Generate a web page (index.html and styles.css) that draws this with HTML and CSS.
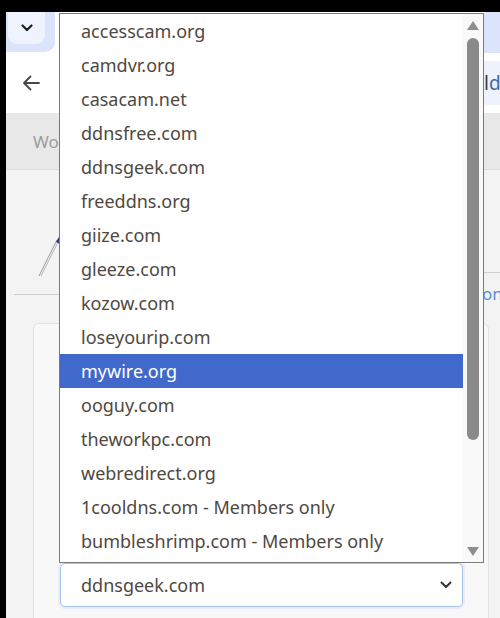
FILE: index.html
```html
<!DOCTYPE html>
<html lang="en">
<head>
<meta charset="utf-8">
<title>Dynamic DNS</title>
<link rel="stylesheet" href="styles.css">
</head>
<body>
<div class="screen">
  <div class="tabstrip">
    <div class="tabstrip-left">
      <div class="tabsearch">
        <svg width="12" height="8" viewBox="0 0 12 8"><path d="M1.5 1.5 L6 6 L10.5 1.5" fill="none" stroke="#1f1f1f" stroke-width="2.2" stroke-linecap="round" stroke-linejoin="round"/></svg>
      </div>
    </div>
    <div class="active-tab"></div>
    <div class="tabstrip-right"></div>
  </div>

  <div class="toolbar">
    <svg class="back" width="18" height="16" viewBox="0 0 18 16"><path d="M17 8 H2 M8.5 1.5 L2 8 L8.5 14.5" fill="none" stroke="#474747" stroke-width="1.8" stroke-linecap="round" stroke-linejoin="round"/></svg>
    <div class="omnibox"><span class="dark">l</span><span class="blue">dl</span></div>
  </div>

  <div class="banner">Wo</div>

  <div class="content">
    <div class="tools">
      <div class="tools-left">
        <svg class="pen" width="24" height="46" viewBox="0 0 24 46"><path d="M2 44 L20 8" stroke="#9a9a9a" stroke-width="1"/><path d="M4 44 L22 8" stroke="#b5b5b5" stroke-width="1"/><path d="M19 10 L23 3 L23 12 Z" fill="#2a3a9a"/></svg>
      </div>
      <div class="tools-right">
        <div class="tools-right-bar"></div>
        <span class="link">on</span>
      </div>
    </div>

    <div class="card">
      <div class="select">
        <span>ddnsgeek.com</span>
        <svg width="12" height="8" viewBox="0 0 12 8"><path d="M1.5 1.5 L6 6 L10.5 1.5" fill="none" stroke="#333" stroke-width="2" stroke-linecap="round" stroke-linejoin="round"/></svg>
      </div>
    </div>
  </div>

  <div class="dropdown">
    <div class="options">
      <div class="opt">accesscam.org</div>
      <div class="opt">camdvr.org</div>
      <div class="opt">casacam.net</div>
      <div class="opt">ddnsfree.com</div>
      <div class="opt">ddnsgeek.com</div>
      <div class="opt">freeddns.org</div>
      <div class="opt">giize.com</div>
      <div class="opt">gleeze.com</div>
      <div class="opt">kozow.com</div>
      <div class="opt">loseyourip.com</div>
      <div class="opt selected">mywire.org</div>
      <div class="opt">ooguy.com</div>
      <div class="opt">theworkpc.com</div>
      <div class="opt">webredirect.org</div>
      <div class="opt">1cooldns.com - Members only</div>
      <div class="opt">bumbleshrimp.com - Members only</div>
    </div>
    <div class="scrollbar">
      <svg class="arrow" width="12" height="9" viewBox="0 0 12 9"><path d="M6 0 L12 9 L0 9 Z" fill="#8e8e8e"/></svg>
      <div class="thumb"></div>
      <div class="spacer"></div>
      <svg class="arrow" width="12" height="9" viewBox="0 0 12 9"><path d="M0 0 L12 0 L6 9 Z" fill="#8e8e8e"/></svg>
    </div>
  </div>
</div>
</body>
</html>
```

FILE: styles.css
```css
* { box-sizing: border-box; }

html, body {
  margin: 0;
  padding: 0;
  background: #000;
  width: 500px;
  height: 618px;
  overflow: hidden;
}

body {
  padding: 12px 0 0 6px;
  font-family: "Noto Sans", "Open Sans", sans-serif;
}

.screen {
  position: relative;
  width: 494px;
  height: 606px;
  background: #f3f3f3;
  overflow: hidden;
}

/* tab strip */
.tabstrip {
  display: flex;
  height: 40px;
  background: #ffffff;
}
.tabstrip-left {
  width: 49px;
  height: 40px;
  background: #dbe4fb;
  border-bottom-right-radius: 10px;
  padding-left: 2px;
}
.tabsearch {
  width: 37px;
  height: 32px;
  background: #eef3fe;
  border-radius: 0 0 9px 9px;
  display: flex;
  align-items: center;
  justify-content: center;
}
.active-tab {
  flex: 1;
  background: #ffffff;
}
.tabstrip-right {
  width: 16px;
  background: #dbe4fb;
  height: 41px;
}

/* toolbar */
.toolbar {
  height: 61px;
  background: #ffffff;
  display: flex;
  align-items: center;
  padding-left: 16px;
}
.back { flex: 0 0 auto; }
.omnibox {
  margin-left: auto;
  flex: 0 0 40px;
  margin-right: -24px;
  height: 44px;
  background: #edf2fb;
  border-radius: 0 22px 22px 0;
  display: flex;
  align-items: center;
  font-size: 19px;
  padding-left: 0;
}
.omnibox .dark { color: #3a3a3a; }
.omnibox .blue { color: #3f66b8; }

/* banner */
.banner {
  height: 57px;
  background: #e8e8e8;
  border-bottom: 1px solid #dcdcdc;
  color: #9c9c9c;
  font-size: 17px;
  padding-left: 27px;
  display: flex;
  align-items: center;
}

/* content */
.content {
  background: #f3f3f3;
}
.tools {
  display: flex;
  align-items: flex-start;
  height: 153px;
}
.tools-left {
  margin-left: 8px;
  width: 60px;
  height: 125px;
  border-bottom: 1px solid #cfcfcf;
  padding: 62px 0 0 23px;
}
.pen { display: block; }
.tools-right {
  margin-left: auto;
  width: 16px;
  display: flex;
  flex-direction: column;
}
.tools-right-bar {
  height: 103px;
  border-bottom: 1px solid #d0d0d0;
}
.link {
  color: #5b8bd6;
  font-size: 17px;
  line-height: 22px;
  padding-top: 10px;
  margin-left: -2px;
  white-space: nowrap;
}

.card {
  margin-left: 27px;
  width: 456px;
  height: 320px;
  background: #f8f8f8;
  border: 1px solid #e2e2e2;
  border-radius: 6px;
  padding: 239px 0 0 26px;
}
.select {
  width: 403px;
  height: 44px;
  background: #ffffff;
  border: 1px solid #a6c2ee;
  border-radius: 5px;
  box-shadow: 0 0 0 2px rgba(120, 160, 230, 0.12);
  display: flex;
  align-items: center;
  justify-content: space-between;
  padding: 0 10px 0 20px;
  font-size: 18px;
  color: #4f4841;
}

/* dropdown popup */
.dropdown {
  position: absolute;
  left: 53px;
  top: 1px;
  width: 425px;
  height: 550px;
  background: #ffffff;
  border: 1px solid #7a7a7a;
  display: flex;
}
.options {
  width: 403px;
}
.opt {
  height: 34px;
  line-height: 34px;
  padding-left: 21px;
  font-size: 18px;
  color: #4f4841;
  white-space: nowrap;
}
.opt.selected {
  background: #4169cc;
  color: #ffffff;
}
.scrollbar {
  width: 20px;
  background: #f9f9f9;
  display: flex;
  flex-direction: column;
  align-items: center;
  padding: 7px 0 6px;
}
.arrow { display: block; flex: 0 0 auto; }
.thumb {
  margin-top: 8px;
  width: 12px;
  height: 402px;
  background: #8a8a8a;
  border-radius: 6px;
}
.spacer { flex: 1; }
```
